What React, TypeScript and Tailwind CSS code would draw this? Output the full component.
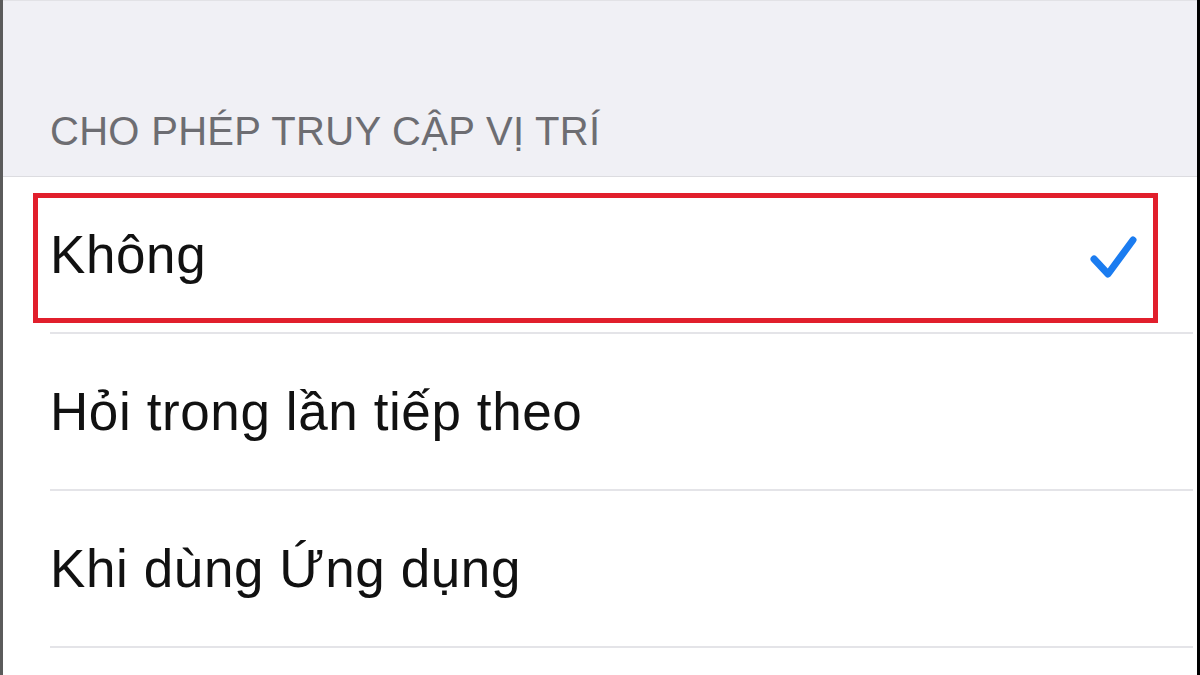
const options = [
  { label: 'Không', selected: true },
  { label: 'Hỏi trong lần tiếp theo', selected: false },
  { label: 'Khi dùng Ứng dụng', selected: false },
];

const Check = () => (
  <svg width="52" height="52" viewBox="0 0 52 52" fill="none" className="shrink-0 mt-[6px]">
    <path
      d="M6 27 L20 42 L45 8"
      stroke="#1b7cf0"
      strokeWidth="7"
      strokeLinecap="round"
      strokeLinejoin="round"
    />
  </svg>
);

export default function App() {
  return (
    <div
      className="relative h-[675px] w-[1200px] overflow-hidden bg-white border-l-[3px] border-l-[#5b5b5b] border-r-[3px] border-r-black"
      style={{ fontFamily: '"Liberation Sans", Arial, sans-serif' }}
    >
      <div className="h-[177px] bg-[#f0f0f5] border-t border-t-[#e2e2e6] border-b border-b-[#dcdce0] pt-[110px] pl-[47px]">
        <div className="text-[40px] leading-[40px] text-[#6d6d72] tracking-[0.3px]">
          CHO PHÉP TRUY CẬP VỊ TRÍ
        </div>
      </div>

      <div className="relative">
        {options.map((o) => (
          <div key={o.label} className="pl-[47px] pr-[4px]">
            <div className="flex h-[157px] items-center justify-between border-b-2 border-[#e4e4e8] pr-[53px]">
              <span className="text-[53px] leading-[53px] tracking-[0.6px] text-[#111]">{o.label}</span>
              {o.selected && <Check />}
            </div>
          </div>
        ))}

        <div className="pointer-events-none absolute left-[30px] top-[16px] h-[130px] w-[1125px] border-[5px] border-[#e11f2c]" />
      </div>
    </div>
  );
}
